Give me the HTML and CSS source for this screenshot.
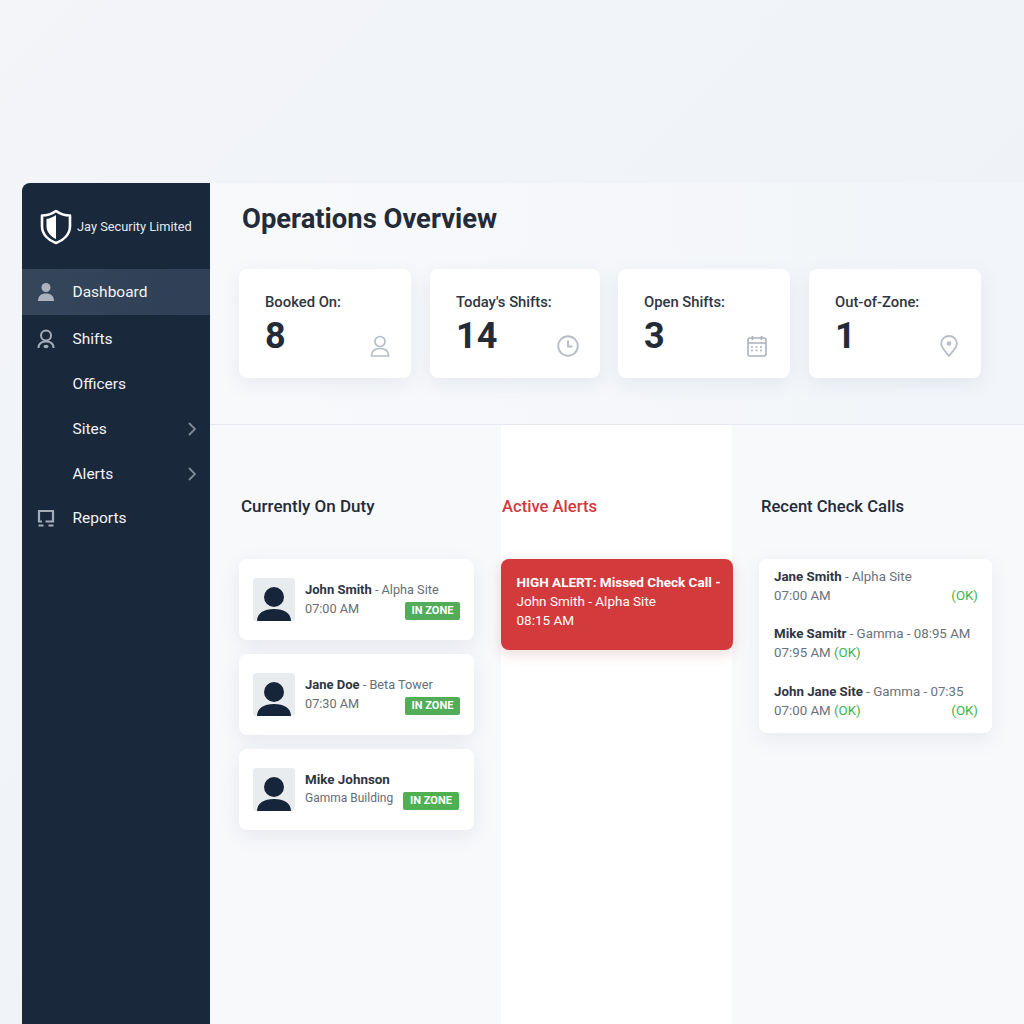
FILE: index.html
```html
<!DOCTYPE html>
<html lang="en">
<head>
  <meta charset="UTF-8">
  <title>Jay Security Limited - Operations Overview</title>
  <link rel="stylesheet" href="styles.css">
</head>
<body>
  <div class="shell">
    <!-- sidebar -->
    <div class="sidebar">
      <div class="brand">
        <svg class="brand-logo" width="32" height="36" viewBox="0 0 32 36">
          <path d="M16 2 C20 5 25 6.500 30 6.500 L30 17 C30 25 24 31 16 34 C8 31 2 25 2 17 L2 6.500 C7 6.500 12 5 16 2 Z" fill="none" stroke="#fff" stroke-width="2.600" stroke-linejoin="round"/>
          <path d="M16 6 C13 8 10 9.500 6.500 10 L6.500 17 C6.500 23 10.500 27.500 16 30 Z" fill="#fff"/>
        </svg>
        <div class="brand-name">Jay Security Limited</div>
      </div>
      <a href="#" class="nav-item active">
        <svg class="nav-icon" width="18" height="20" viewBox="0 0 18 20"><circle cx="9" cy="5.500" r="4.500" fill="#a9b2bd"/><path d="M1 19 C1 14 4 11.500 9 11.500 C14 11.500 17 14 17 19 Z" fill="#a9b2bd"/></svg>
        <span class="nav-label">Dashboard</span>
      </a>
      <a href="#" class="nav-item">
        <svg class="nav-icon" width="18" height="20" viewBox="0 0 18 20" fill="none" stroke="#a3adb9" stroke-width="2"><circle cx="9" cy="6.500" r="5"/><path d="M1.500 19 C1.500 14.500 4 12.500 9 12.500 C14 12.500 16.500 14.500 16.500 19"/><ellipse cx="9" cy="17.500" rx="2.500" ry="1.800" fill="#a3adb9" stroke="none"/></svg>
        <span class="nav-label">Shifts</span>
      </a>
      <a href="#" class="nav-item"><span class="nav-label no-icon">Officers</span></a>
      <a href="#" class="nav-item">
        <span class="nav-label no-icon">Sites</span>
        <svg class="nav-arrow" width="8" height="14" viewBox="0 0 8 14"><path d="M1 1 L7 7 L1 13" fill="none" stroke="#7f8b99" stroke-width="1.800"/></svg>
      </a>
      <a href="#" class="nav-item">
        <span class="nav-label no-icon">Alerts</span>
        <svg class="nav-arrow" width="8" height="14" viewBox="0 0 8 14"><path d="M1 1 L7 7 L1 13" fill="none" stroke="#7f8b99" stroke-width="1.800"/></svg>
      </a>
      <a href="#" class="nav-item">
        <svg class="nav-icon" width="18" height="18" viewBox="0 0 18 18" fill="none" stroke="#a3adb9" stroke-width="2.200"><path d="M5 12.500 H2 V2 H16 V12.500 H8.500"/><path d="M1.500 16.500 H6.500 M11.500 16.500 H16.500"/></svg>
        <span class="nav-label">Reports</span>
      </a>
    </div>

    <div class="main">
      <div class="top-section">
        <div class="page-title">Operations Overview</div>
        <div class="stat-row">
          <div class="stat-card">
            <div class="stat-label">Booked On:</div>
            <div class="stat-bottom">
              <div class="stat-value">8</div>
              <svg class="stat-icon" width="20" height="22" viewBox="0 0 20 22" fill="none" stroke="#b8bec7" stroke-width="1.700"><circle cx="10" cy="6.500" r="5"/><path d="M1.500 21 C1.500 15.500 4.500 13.500 10 13.500 C15.500 13.500 18.500 15.500 18.500 21 Z"/></svg>
            </div>
          </div>
          <div class="stat-card">
            <div class="stat-label">Today's Shifts:</div>
            <div class="stat-bottom">
              <div class="stat-value">14</div>
              <svg class="stat-icon" width="22" height="22" viewBox="0 0 22 22" fill="none" stroke="#b8bec7" stroke-width="1.900"><circle cx="11" cy="11" r="9.800"/><path d="M11 5.500 V11.500 H15.500"/></svg>
            </div>
          </div>
          <div class="stat-card">
            <div class="stat-label">Open Shifts:</div>
            <div class="stat-bottom">
              <div class="stat-value">3</div>
              <svg class="stat-icon" width="20" height="22" viewBox="0 0 20 22" fill="none" stroke="#abb2bc" stroke-width="1.600"><rect x="1" y="3" width="18" height="18" rx="2"/><path d="M1 8 H19 M5.500 1 V5 M14.500 1 V5"/><path d="M4 12 H7 M8.500 12 H11.500 M13 12 H16 M4 15.500 H7 M8.500 15.500 H11.500 M13 15.500 H16" stroke-dasharray="2 1"/></svg>
            </div>
          </div>
          <div class="stat-card">
            <div class="stat-label">Out-of-Zone:</div>
            <div class="stat-bottom">
              <div class="stat-value">1</div>
              <svg class="stat-icon" width="18" height="22" viewBox="0 0 18 22" fill="none" stroke="#b8bec7" stroke-width="1.800"><path d="M9 21 C5 16 1.200 12.500 1.200 8.500 C1.200 4.200 4.700 1 9 1 C13.300 1 16.800 4.200 16.800 8.500 C16.800 12.500 13 16 9 21 Z"/><circle cx="9" cy="8.500" r="2.300" fill="#b8bec7" stroke="none"/></svg>
            </div>
          </div>
        </div>
      </div>

      <div class="columns">
        <div class="col col-duty">
          <div class="col-title">Currently On Duty</div>
          <div class="duty-list">
            <div class="duty-card">
              <div class="avatar"><svg width="42" height="43" viewBox="0 0 42 43"><circle cx="21" cy="19" r="10" fill="#17253a"/><path d="M4 43 C4 35 11 31 21 31 C31 31 38 35 38 43 Z" fill="#17253a"/></svg></div>
              <div class="duty-body">
                <div class="duty-name"><b>John Smith</b> - Alpha Site</div>
                <div class="duty-row"><span>07:00 AM</span><span class="badge">IN ZONE</span></div>
              </div>
            </div>
            <div class="duty-card">
              <div class="avatar"><svg width="42" height="43" viewBox="0 0 42 43"><circle cx="21" cy="19" r="10" fill="#17253a"/><path d="M4 43 C4 35 11 31 21 31 C31 31 38 35 38 43 Z" fill="#17253a"/></svg></div>
              <div class="duty-body">
                <div class="duty-name"><b>Jane Doe</b> - Beta Tower</div>
                <div class="duty-row"><span>07:30 AM</span><span class="badge">IN ZONE</span></div>
              </div>
            </div>
            <div class="duty-card">
              <div class="avatar"><svg width="42" height="43" viewBox="0 0 42 43"><circle cx="21" cy="19" r="10" fill="#17253a"/><path d="M4 43 C4 35 11 31 21 31 C31 31 38 35 38 43 Z" fill="#17253a"/></svg></div>
              <div class="duty-body">
                <div class="duty-name"><b class="name-large">Mike Johnson</b></div>
                <div class="duty-row"><span class="place">Gamma Building</span><span class="badge badge-shifted">IN ZONE</span></div>
              </div>
            </div>
          </div>
        </div>

        <div class="col col-alerts">
          <div class="col-title alert-title">Active Alerts</div>
          <div class="alert-card">
            <b>HIGH ALERT: Missed Check Call -</b><br>
            John Smith - Alpha Site<br>
            08:15 AM
          </div>
        </div>

        <div class="col col-calls">
          <div class="col-title calls-title">Recent Check Calls</div>
          <div class="calls-card">
            <div class="call-item">
              <div><b>Jane Smith</b> - Alpha Site</div>
              <div class="call-row"><span>07:00 AM</span><span class="ok">(OK)</span></div>
            </div>
            <div class="call-item">
              <div><b>Mike Samitr</b> - Gamma - 08:95 AM</div>
              <div>07:95 AM <span class="ok">(OK)</span></div>
            </div>
            <div class="call-item">
              <div><b>John Jane Site</b> - Gamma - 07:35</div>
              <div class="call-row"><span>07:00 AM <span class="ok">(OK)</span></span><span class="ok">(OK)</span></div>
            </div>
          </div>
        </div>
      </div>
    </div>
  </div>
</body>
</html>
```

FILE: styles.css
```css
html, body {
  margin: 0;
  padding: 0;
  height: 1024px;
  overflow: hidden;
}
body {
  font-family: Roboto, 'Liberation Sans', sans-serif;
  background: linear-gradient(135deg, #f3f5f9 0%, #eff2f7 60%, #edf1f6 100%);
  padding-top: 183px;
  padding-left: 22px;
  box-sizing: border-box;
  color: #232b38;
}
.shell {
  display: flex;
  height: 841px;
}
.sidebar {
  width: 188px;
  flex-shrink: 0;
  background: #1a283c;
  border-radius: 8px 0 0 0;
  color: #fff;
}
.brand {
  height: 86px;
  display: flex;
  align-items: center;
  padding-left: 17px;
  gap: 6px;
}
.brand-logo {
  margin-top: 2px;
  margin-left: 1px;
  margin-right: -1px;
}
.brand-name {
  font-size: 12.800px;
  color: #e4e8ed;
}
.nav-item {
  height: 44.750px;
  display: flex;
  align-items: center;
  padding: 0 14px 0 15px;
  color: #f1f3f6;
  text-decoration: none;
  font-size: 15.500px;
}
.nav-item.active {
  height: 46px;
  margin-bottom: 2px;
  background: linear-gradient(90deg, #35465b 0%, #2f4056 100%);
}
.nav-icon {
  width: 18px;
  margin-right: 17.500px;
  flex-shrink: 0;
}
.nav-label.no-icon {
  margin-left: 35.500px;
}
.nav-arrow {
  margin-left: auto;
}
.main {
  flex: 1;
  background: #f8f9fb;
  display: flex;
  flex-direction: column;
}
.top-section {
  height: 242px;
  box-sizing: border-box;
  border-bottom: 1px solid #e6eaf0;
  background: linear-gradient(90deg, #f8f9fb 0%, #f2f5f9 100%);
  padding: 18px 0 0 29px;
}
.page-title {
  font-size: 27.400px;
  line-height: 36px;
  font-weight: 700;
  padding-left: 3px;
  color: #232b38;
}
.stat-row {
  display: flex;
  gap: 19px;
  margin-top: 32px;
}
.stat-card {
  width: 172px;
  height: 109px;
  box-sizing: border-box;
  background: #fff;
  border-radius: 8px;
  padding: 24px 21px 0 26px;
  box-shadow: 0 6px 20px rgba(90, 110, 140, 0.1);
}
.stat-card:nth-child(2) {
  width: 170px;
}
.stat-card:nth-child(3) {
  margin-left: -1px;
}
.stat-card:nth-child(n+3) {
  padding-right: 23px;
}
.stat-label {
  font-size: 14.800px;
  line-height: 18px;
  font-weight: 500;
  color: #2e3642;
}
.stat-bottom {
  display: flex;
  justify-content: space-between;
  align-items: flex-end;
  margin-top: 3px;
}
.stat-value {
  font-size: 36px;
  line-height: 44px;
  font-weight: 700;
  color: #232b38;
}
.stat-icon {
  margin-bottom: 1px;
}
.columns {
  flex: 1;
  display: grid;
  grid-template-columns: 291px 231px 292px;
}
.col {
  padding-top: 70px;
}
.col-duty {
  padding-left: 29px;
  padding-right: 27px;
}
.col-alerts {
  background: #fff;
}
.col-calls {
  padding-left: 27px;
  padding-right: 32px;
}
.col-title {
  font-size: 17px;
  line-height: 22px;
  font-weight: 500;
  color: #232b38;
  margin-bottom: 42px;
  padding-left: 2px;
}
.alert-title {
  font-size: 16.600px;
  color: #d3393a;
  padding-left: 1px;
  padding-top: 1px;
  margin-bottom: 41px;
}
.calls-title {
  font-size: 16.600px;
  padding-top: 1px;
  margin-bottom: 41px;
}
.duty-list {
  display: flex;
  flex-direction: column;
  gap: 14px;
}
.duty-card {
  height: 81px;
  box-sizing: border-box;
  background: #fff;
  border-radius: 8px;
  padding: 19px 14px;
  display: flex;
  gap: 10px;
  box-shadow: 0 6px 20px rgba(90, 110, 140, 0.12);
}
.avatar {
  width: 42px;
  height: 43px;
  flex-shrink: 0;
  background: #e9ecef;
  border-radius: 3px;
  overflow: hidden;
}
.avatar svg {
  display: block;
}
.duty-body {
  flex: 1;
  font-size: 12.700px;
  line-height: 19px;
  color: #666d77;
  margin-top: 2px;
}
.duty-name b {
  font-size: 13px;
  font-weight: 700;
  color: #2e3642;
}
.duty-name b.name-large {
  font-size: 13.400px;
}
.duty-row {
  display: flex;
  justify-content: space-between;
  align-items: flex-start;
}
.place {
  font-size: 12px;
}
.badge {
  background: #53ac57;
  color: #fff;
  font-size: 11px;
  font-weight: 700;
  line-height: 18px;
  width: 55px;
  text-align: center;
  border-radius: 2px;
  margin-top: 3px;
}
.badge-shifted {
  width: 56px;
  margin-right: 1px;
  background: #4fb052;
}
.alert-card {
  width: 232px;
  height: 91px;
  box-sizing: border-box;
  background: #d33a3c;
  color: #fff;
  border-radius: 8px;
  padding: 14px 0 0 15.500px;
  font-size: 13.500px;
  line-height: 19px;
  box-shadow: 0 4px 14px rgba(150, 60, 60, 0.2);
}
.calls-card {
  background: #fff;
  border-radius: 8px;
  padding: 8px 14px 14px 15px;
  height: 174px;
  box-sizing: border-box;
  font-size: 13.300px;
  line-height: 19px;
  color: #6a717b;
  box-shadow: 0 6px 20px rgba(90, 110, 140, 0.1);
}
.calls-card b {
  font-weight: 700;
  color: #2e3642;
}
.call-item {
  margin-bottom: 19px;
}
.call-item:last-child {
  margin-top: 20px;
}
.call-row {
  display: flex;
  justify-content: space-between;
}
.ok {
  color: #3bb54a;
}
```
